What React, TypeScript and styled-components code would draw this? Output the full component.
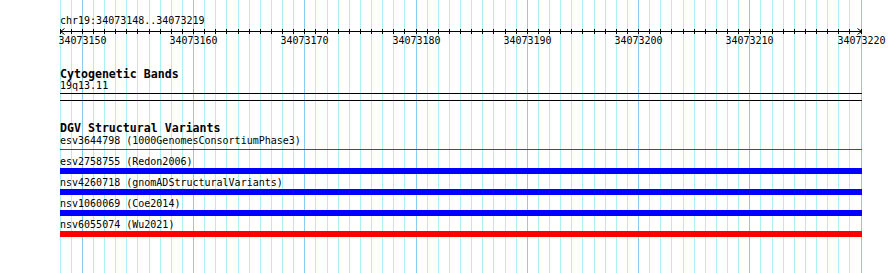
import styled, { createGlobalStyle } from "styled-components"

const GlobalStyle = createGlobalStyle`
  html, body {
    margin: 0;
    padding: 0;
    background: #ffffff;
  }
`

const START = 34073148
const BASES = 72
const LEFT = 60
const SPAN = 801
const MONO = '"DejaVu Sans Mono", "Liberation Mono", monospace'

const baseX = (i: number) => Math.floor(LEFT + (i * SPAN) / BASES)

type Variant = {
  name: string
  source: string
  color: string
  thin?: boolean
}

const variants: Variant[] = [
  { name: "esv3644798", source: "1000GenomesConsortiumPhase3", color: "#ff0000", thin: true },
  { name: "esv2758755", source: "Redon2006", color: "#0000ff" },
  { name: "nsv4260718", source: "gnomADStructuralVariants", color: "#0000ff" },
  { name: "nsv1060069", source: "Coe2014", color: "#0000ff" },
  { name: "nsv6055074", source: "Wu2021", color: "#ff0000" },
]

const Page = styled.div`
  position: relative;
  width: 890px;
  height: 273px;
  overflow: hidden;
  background: #ffffff;
  font-family: ${MONO};
  color: #000000;
`

const Guides = styled.svg`
  position: absolute;
  left: 0;
  top: 0;
`

const Tracks = styled.div`
  position: relative;
  display: flex;
  flex-direction: column;
  padding: 15px 0 0 ${LEFT}px;
  width: 802px;
`

const Position = styled.div`
  font-size: 10px;
  line-height: 12px;
  height: 12px;
  white-space: pre;
`

const RulerSvg = styled.svg`
  display: block;
  margin-left: -${LEFT}px;
`

const TrackTitle = styled.div<{ $gap: number }>`
  margin-top: ${(p) => p.$gap}px;
  font-size: 11.6px;
  font-weight: bold;
  line-height: 12px;
  height: 12px;
  white-space: pre;
`

const ItemLabel = styled.div`
  font-size: 10px;
  line-height: 12px;
  height: 12px;
  white-space: pre;
`

const Band = styled.div`
  margin-top: 1px;
  height: 6px;
  border-top: 1px solid #000000;
  border-bottom: 1px solid #000000;
`

const VariantList = styled.div`
  display: flex;
  flex-direction: column;
  gap: 3px;
  margin-top: 1px;
`

const VariantRow = styled.div`
  display: flex;
  flex-direction: column;
`

const BarArea = styled.div`
  height: 6px;
  display: flex;
  flex-direction: column;
`

const Bar = styled.div<{ $color: string; $thin?: boolean }>`
  background: ${(p) => p.$color};
  height: ${(p) => (p.$thin ? 1 : 6)}px;
  margin-top: ${(p) => (p.$thin ? 2 : 0)}px;
`

const GuideLines = () => (
  <Guides width={890} height={273} shapeRendering="crispEdges">
    {Array.from({ length: BASES + 1 }, (_, i) => {
      const major = (START + i) % 10 === 0
      const x = baseX(i) + 0.5
      return (
        <line
          key={i}
          x1={x}
          x2={x}
          y1={0}
          y2={273}
          stroke={major ? "#88ccf0" : "#aaf0f4"}
          strokeWidth={1}
        />
      )
    })}
  </Guides>
)

const Ruler = () => (
  <RulerSvg width={890} height={20} shapeRendering="crispEdges">
    <line x1={LEFT} x2={baseX(BASES) + 1} y1={4.5} y2={4.5} stroke="#000" />
    {Array.from({ length: BASES + 1 }, (_, i) => (
      <line
        key={i}
        x1={baseX(i) + 0.5}
        x2={baseX(i) + 0.5}
        y1={2}
        y2={7}
        stroke="#000"
      />
    ))}
    <polyline
      points={`${LEFT + 4.5},1.5 ${LEFT + 0.5},4.5 ${LEFT + 4.5},7.5`}
      fill="none"
      stroke="#000"
      shapeRendering="auto"
    />
    <polyline
      points={`${baseX(BASES) - 3.5},1.5 ${baseX(BASES) + 0.5},4.5 ${baseX(BASES) - 3.5},7.5`}
      fill="none"
      stroke="#000"
      shapeRendering="auto"
    />
    {Array.from({ length: BASES + 1 }, (_, i) => i)
      .filter((i) => (START + i) % 10 === 0)
      .map((i) => (
        <text
          key={i}
          x={baseX(i) + 0.5}
          y={17}
          textAnchor="middle"
          fontSize={10}
          fontFamily={MONO}
          fill="#000"
        >
          {START + i}
        </text>
      ))}
  </RulerSvg>
)

export default function App() {
  return (
    <>
      <GlobalStyle />
      <Page>
        <GuideLines />
        <Tracks>
          <Position>chr19:34073148..34073219</Position>
          <Ruler />
          <TrackTitle $gap={21}>Cytogenetic Bands</TrackTitle>
          <ItemLabel>19q13.11</ItemLabel>
          <Band />
          <TrackTitle $gap={21}>DGV Structural Variants</TrackTitle>
          <VariantList>
            {variants.map((v) => (
              <VariantRow key={v.name}>
                <ItemLabel>
                  {v.name} ({v.source})
                </ItemLabel>
                <BarArea>
                  <Bar $color={v.color} $thin={v.thin} />
                </BarArea>
              </VariantRow>
            ))}
          </VariantList>
        </Tracks>
      </Page>
    </>
  )
}
